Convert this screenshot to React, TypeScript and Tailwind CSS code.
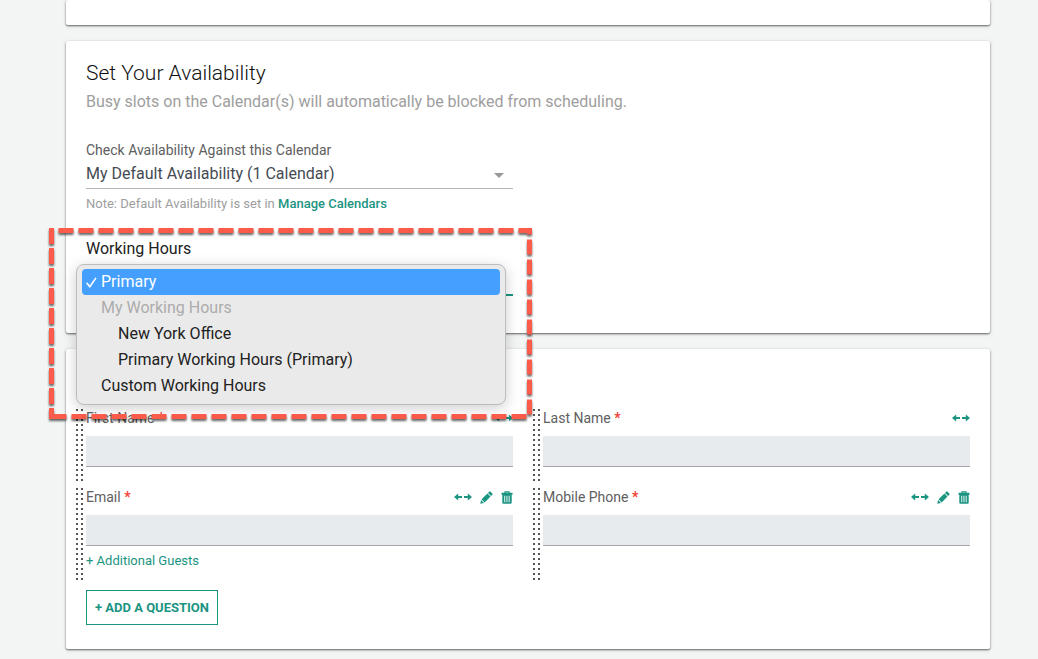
import React, { useState } from 'react'

type Field = {
  id: string
  label: string
  type: string
  editable?: boolean
  addGuests?: boolean
}

const fields: Field[] = [
  { id: 'firstName', label: 'First Name', type: 'text' },
  { id: 'lastName', label: 'Last Name', type: 'text' },
  { id: 'email', label: 'Email', type: 'email', editable: true, addGuests: true },
  { id: 'phone', label: 'Mobile Phone', type: 'tel', editable: true }
]

const workingHours = [
  { label: 'Primary', style: 'pl-[19px]' },
  { label: 'My Working Hours', style: 'pl-[19px] text-[#acacac]', disabled: true },
  { label: 'New York Office', style: 'pl-9' },
  { label: 'Primary Working Hours (Primary)', style: 'pl-9' },
  { label: 'Custom Working Hours', style: 'pl-[19px]' }
]

function ResizeIcon() {
  return (
    <svg width="18" height="12" viewBox="0 0 18 12" fill="currentColor">
      <path d="M0 6l4.2-3.4v2.3H8v2.2H4.2v2.3zM18 6l-4.2-3.4v2.3H10v2.2h3.8v2.3z" />
    </svg>
  )
}

function PencilIcon() {
  return (
    <svg width="13" height="13" viewBox="0 0 13 13" fill="currentColor">
      <path d="M9.2.7q.7-.7 1.4 0l1.7 1.7q.7.7 0 1.4l-1.2 1.2-3.1-3.1zM7.4 2.5l3.1 3.1-5.8 5.8-3.1-3.1zM1.1 9l2.9 2.9-3.7.9z" />
    </svg>
  )
}

function TrashIcon() {
  return (
    <svg width="12" height="13" viewBox="0 0 12 13">
      <path d="M4 2V.8h4V2" fill="none" stroke="currentColor" strokeWidth="1.2" />
      <path
        fillRule="evenodd"
        fill="currentColor"
        d="M.5 1.8h11v1.9h-11zM1.3 3.7h9.4v7.8q0 1.3-1.3 1.3H2.6q-1.3 0-1.3-1.3zM3.3 4.8v6.5h.9V4.8zM5.5 4.8v6.5h.9V4.8zM7.7 4.8v6.5h.9V4.8z"
      />
    </svg>
  )
}

// Two columns of dots down the left side of a question
function DragHandle() {
  return (
    <div className="mr-0.5 w-[10px] shrink-0 bg-[radial-gradient(circle_at_3px_2px,#555_1px,transparent_1px)] bg-[length:5px_5px]" />
  )
}

function QuestionField({ field }: { field: Field }) {
  return (
    <div className="flex min-h-[75px]">
      <DragHandle />
      <div className="flex-1">
        <div className="flex h-7 items-start justify-between">
          <label htmlFor={field.id} className="text-sm leading-5 text-[#606060]">
            {field.label} <span className="font-bold text-[#f44336]">*</span>
          </label>
          <div className="flex h-5 items-center gap-2 text-[#1b9482]">
            <button type="button" aria-label={`Resize ${field.label}`}>
              <ResizeIcon />
            </button>
            {field.editable && (
              <>
                <button type="button" aria-label={`Edit ${field.label}`}>
                  <PencilIcon />
                </button>
                <button type="button" aria-label={`Delete ${field.label}`}>
                  <TrashIcon />
                </button>
              </>
            )}
          </div>
        </div>
        <input
          id={field.id}
          type={field.type}
          className="block h-[31px] w-full border-b border-[#a8a6ab] bg-[#e8ebee] px-2 text-sm outline-none"
        />
        {field.addGuests && (
          <div className="pt-[5px] pb-[11px]">
            <button type="button" className="block text-[13px] leading-5 text-[#1b9482]">
              + Additional Guests
            </button>
          </div>
        )}
      </div>
    </div>
  )
}

export default function App() {
  const [selected, setSelected] = useState('Primary')

  const card =
    'rounded-xs bg-white shadow-[0_1px_2px_rgba(0,0,0,0.55),0_1px_4px_rgba(0,0,0,0.12)]'

  return (
    <div className="min-h-screen space-y-4 overflow-hidden bg-[#f3f5f5] pr-12 pb-[10px] pl-[66px] font-['Roboto',sans-serif]">
      <div className={`h-[25px] ${card}`} />

      {/* Availability */}
      <section className={`px-5 pt-4 pb-[37px] ${card}`}>
        <h2 className="text-[21px] leading-8 font-light text-[#111]">Set Your Availability</h2>
        <p className="mt-px text-base leading-6 text-[#9e9e9e]">
          Busy slots on the Calendar(s) will automatically be blocked from scheduling.
        </p>

        <div className="mt-6 mr-[457px]">
          <label htmlFor="calendar" className="block text-sm leading-6 text-[#606060]">
            Check Availability Against this Calendar
          </label>
          <div className="relative">
            <select
              id="calendar"
              className="block h-[27px] w-full appearance-none border-b border-[#b4b4b4] bg-white pb-0.5 text-base leading-5 text-[#454b54] outline-none"
            >
              <option>My Default Availability (1 Calendar)</option>
            </select>
            <svg
              className="pointer-events-none absolute top-[11px] right-[9px]"
              width="10"
              height="5"
              viewBox="0 0 10 5"
              fill="#999"
            >
              <path d="M0 0h10L5 5z" />
            </svg>
          </div>
          <p className="mt-[5px] text-[13px] leading-5 text-[#9e9e9e]">
            Note: Default Availability is set in{' '}
            <a href="#calendars" className="font-medium text-[#1b9482]">
              Manage Calendars
            </a>
          </p>

          {/* Working hours with its menu open */}
          <div className="relative mt-[23px]">
            <button
              type="button"
              id="workingHours"
              aria-haspopup="listbox"
              className="block w-full border-b-2 border-[#1b9482] text-left align-top text-base text-[#212121]"
            >
              <span className="block h-[57px] leading-6">Working Hours</span>
            </button>
            <ul
              role="listbox"
              aria-labelledby="workingHours"
              className="absolute top-[27px] right-[7px] -left-[10px] z-10 rounded-lg border border-[#bdbdbd] bg-[#eaeaea] px-[5px] pt-1 pb-[5px] text-base text-[#212121] shadow-[0_3px_14px_rgba(0,0,0,0.2)]"
            >
              {workingHours.map((option) => (
                <li key={option.label} role="option" aria-selected={selected === option.label}>
                  <button
                    type="button"
                    disabled={option.disabled}
                    onClick={() => setSelected(option.label)}
                    className={`relative block h-[26px] w-full rounded-[4px] text-left leading-[26px] ${option.style} ${
                      selected === option.label ? 'bg-[#449fff] text-white' : ''
                    }`}
                  >
                    {selected === option.label && (
                      <svg
                        className="absolute top-2 left-1"
                        width="11"
                        height="11"
                        viewBox="0 0 11 11"
                        fill="none"
                        stroke="currentColor"
                        strokeWidth="1.6"
                        strokeLinecap="round"
                        strokeLinejoin="round"
                      >
                        <path d="M1 6.3l2.8 3.5L9.6 1.4" />
                      </svg>
                    )}
                    {option.label}
                  </button>
                </li>
              ))}
            </ul>

            {/* Highlight around the menu */}
            <svg
              className="pointer-events-none absolute -top-[10px] -left-9 z-20 h-[194px] w-[482px] overflow-visible drop-shadow-[0_2px_1px_rgba(0,0,0,0.6)]"
              fill="none"
              stroke="#fb5b4b"
              strokeWidth="5"
            >
              <path d="M1.5 3.5h478v186h-478" strokeDasharray="15 5" strokeDashoffset="-7" />
              <path d="M1.5 1v191" strokeDasharray="16 4" />
            </svg>
          </div>
        </div>
      </section>

      {/* Questions */}
      <section className={`pt-[59px] pr-5 pb-6 pl-2 ${card}`}>
        <div className="grid grid-cols-2 gap-x-[18px] gap-y-1">
          {fields.map((field) => (
            <QuestionField key={field.id} field={field} />
          ))}
        </div>
        <button
          type="button"
          className="mt-2 ml-3 h-[35px] border border-[#1b9482] px-2 text-[13px] font-bold text-[#1b9482]"
        >
          + ADD A QUESTION
        </button>
      </section>
    </div>
  )
}
